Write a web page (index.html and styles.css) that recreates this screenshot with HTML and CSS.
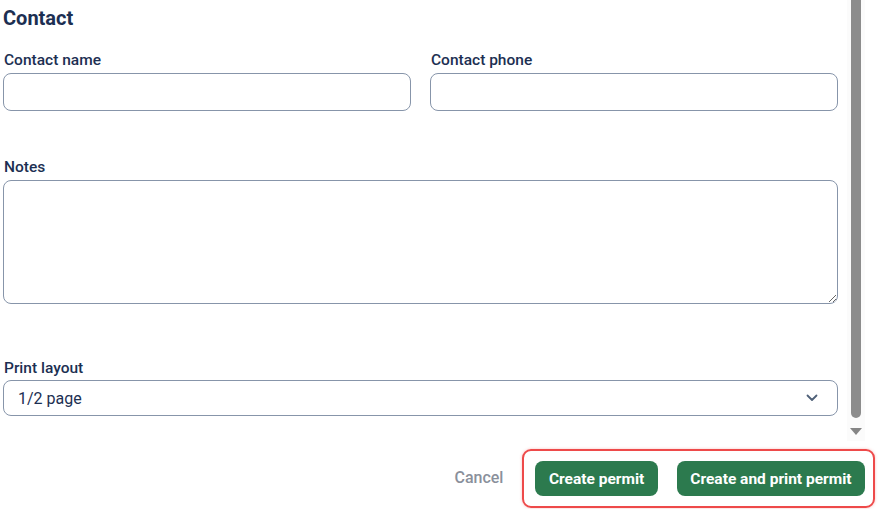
FILE: index.html
```html
<!DOCTYPE html>
<html lang="en">
<head>
<meta charset="utf-8">
<title>Contact</title>
<link rel="stylesheet" href="styles.css">
</head>
<body>
<div class="page">
  <div class="scroll-area">
    <div class="form">
      <h2 class="title">Contact</h2>
      <div class="row">
        <div class="field">
          <label class="label">Contact name</label>
          <input class="input" type="text">
        </div>
        <div class="field">
          <label class="label">Contact phone</label>
          <input class="input" type="text">
        </div>
      </div>
      <div class="field notes">
        <label class="label">Notes</label>
        <textarea class="textarea"></textarea>
      </div>
      <div class="field print">
        <label class="label label-tight">Print layout</label>
        <div class="select">
          <span>1/2 page</span>
          <svg width="12" height="8" viewBox="0 0 12 8"><path d="M1.5 1.5 L6 6 L10.5 1.5" fill="none" stroke="#4f6078" stroke-width="1.8" stroke-linecap="round" stroke-linejoin="round"/></svg>
        </div>
      </div>
    </div>
    <div class="scrollbar">
      <div class="thumb"></div>
      <div class="arrow"></div>
    </div>
  </div>
  <div class="footer">
    <button class="cancel">Cancel</button>
    <div class="highlight">
      <button class="btn">Create permit</button>
      <button class="btn">Create and print permit</button>
    </div>
  </div>
</div>
</body>
</html>
```

FILE: styles.css
```css
* { box-sizing: border-box; }
html, body { margin: 0; padding: 0; background: #ffffff; }
body {
  font-family: Roboto, "Liberation Sans", sans-serif;
  color: #1c2f52;
  width: 879px;
  height: 509px;
  overflow: hidden;
}
.page { display: flex; flex-direction: column; height: 509px; }
.scroll-area { display: flex; height: 441px; }
.form { width: 847px; padding: 0 9px 0 3px; }
.title {
  margin: 6px 0 0 0;
  font-size: 20px;
  line-height: 24px;
  font-weight: 700;
  color: #1c2f52;
}
.row { display: grid; grid-template-columns: 1fr 1fr; column-gap: 19px; margin-top: 21px; }
.field { display: flex; flex-direction: column; }
.label {
  font-size: 15.5px;
  line-height: 18px;
  font-weight: 500;
  color: #1c2f52;
  margin: 0 0 4px 1px;
}
.label-tight { margin-bottom: 3px; }
.input {
  height: 38px;
  border: 1px solid #8795aa;
  border-radius: 8px;
  background: #fff;
  font: inherit;
  outline: none;
}
.notes { margin-top: 47px; }
.textarea {
  height: 124px;
  border: 1px solid #8795aa;
  border-radius: 8px;
  resize: vertical;
  font: inherit;
  outline: none;
  width: 835px;
}
.print { margin-top: 55px; }
.select {
  height: 36px;
  border: 1px solid #8795aa;
  border-radius: 8px;
  display: flex;
  align-items: center;
  justify-content: space-between;
  padding: 0 19px 0 14px;
  font-size: 16px;
  color: #1c2f52;
}
.scrollbar {
  width: 18px;
  background: #fbfbfb;
  display: flex;
  flex-direction: column;
  align-items: center;
}
.thumb {
  width: 10px;
  height: 418px;
  background: #8c8c8c;
  border-radius: 0 0 5px 5px;
}
.arrow {
  margin-top: 10px;
  width: 0;
  height: 0;
  border-left: 6px solid transparent;
  border-right: 6px solid transparent;
  border-top: 7px solid #858585;
}
.footer {
  display: flex;
  justify-content: flex-end;
  align-items: flex-start;
  padding: 8px 4px 0 0;
}
.cancel {
  background: none;
  border: none;
  font-family: inherit;
  font-size: 16px;
  font-weight: 500;
  color: #8a909b;
  padding: 0;
  margin: 20px 19px 0 0;
  line-height: 18px;
}
.highlight {
  display: flex;
  gap: 19px;
  padding: 10px 8px 0 11px;
  height: 59px;
  border: 2px solid #ee4a4a;
  border-radius: 9px;
  box-shadow: 0 0 3px rgba(238, 74, 74, 0.35);
}
.btn {
  height: 35px;
  background: #2c7a4e;
  color: #ffffff;
  border: none;
  border-radius: 8px;
  font-family: inherit;
  font-size: 15.5px;
  font-weight: 700;
  padding: 0 13.5px;
}
```
